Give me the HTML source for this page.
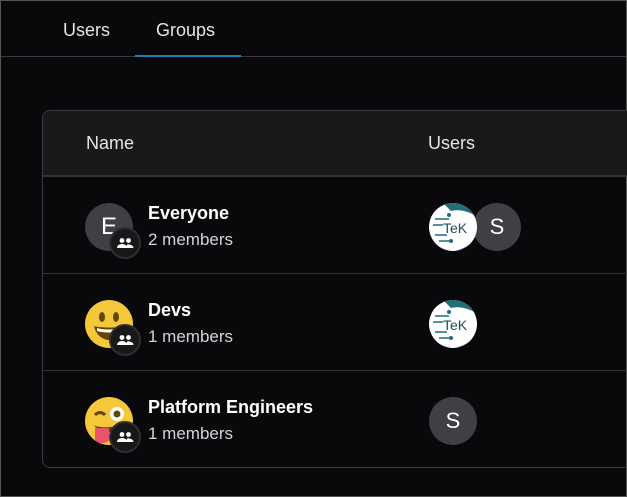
<!DOCTYPE html>
<html><head><style>
*{margin:0;padding:0;box-sizing:border-box}
body{width:627px;height:497px;background:#09090b;font-family:"Liberation Sans",sans-serif;color:#e4e4e7;position:relative;overflow:hidden;border:1px solid #555}
.t{position:absolute;top:19px;font-size:18px;color:#e4e4e7}
.line{position:absolute;left:0;right:0;top:55px;height:1px;background:#3a3a3e}
.ul{position:absolute;left:134px;width:106px;top:54px;height:2px;background:#1a7fb5}
.card{position:absolute;left:41px;top:109px;width:600px;height:358px;border:1px solid #3a3a3e;border-radius:8px;overflow:hidden}
.hd{height:66px;background:#19191b;border-bottom:2px solid #333;position:relative}
.hd span{position:absolute;top:22px;font-size:18px}
.row{height:97px;border-bottom:1px solid #333;position:relative}
.row:last-child{border-bottom:none}
.av{position:absolute;left:42px;top:26px;width:48px;height:48px;border-radius:50%;background:#3f3f46;color:#fff;font-size:24px;text-align:center;line-height:48px;overflow:hidden}
.bd{position:absolute;left:66px;top:50px;width:32px;height:32px;border-radius:50%;background:#18181b;border:2px solid #2e2e32}
.bd svg{position:absolute;left:1px;top:1px}
.nm{position:absolute;left:105px;top:26px;font-size:18px;font-weight:bold;color:#fff}
.sb{position:absolute;left:105px;top:53px;font-size:17px;color:#d4d4d8}
.u{position:absolute;top:26px;width:48px;height:48px;border-radius:50%;background:#3f3f46;color:#fff;font-size:22px;text-align:center;line-height:48px}
.tek{background:#fff;border:0;overflow:hidden}
</style></head><body>
<div class="t" style="left:62px">Users</div>
<div class="t" style="left:155px">Groups</div>
<div class="line"></div><div class="ul"></div>
<div class="card">
<div class="hd"><span style="left:43px">Name</span><span style="left:385px">Users</span></div>
<div class="row">
<div class="av">E</div>
<div class="bd"><svg width="26" height="26" viewBox="0 0 26 26"><g fill="#fff"><circle cx="10" cy="10.5" r="2.4"/><circle cx="16.5" cy="10.5" r="2.4"/><path d="M5 18c0-3 3-4 5-4s5 1 5 4z M14 18c0-2 1-3 1.5-3.8 2.5 0 6 1 6 3.8z"/></g></svg></div>
<div class="nm">Everyone</div><div class="sb">2 members</div>
<div class="u" style="left:430px">S</div>
<div class="u tek" style="left:386px"><svg width="48" height="48" viewBox="0 0 48 48"><path d="M14 0h34v14C40 8 30 6 22 8z" fill="#1f6e7a"/><path d="M26 48h22V34C42 42 34 46 26 48z" fill="#1f6e7a"/><g stroke="#1f6e7a" stroke-width="1.5" fill="none"><path d="M6 16h14M4 22h10M6 32h12M10 38h14"/></g><circle cx="20" cy="12" r="2" fill="#1f6e7a"/><circle cx="22" cy="38" r="2" fill="#1f6e7a"/><text x="14" y="30" font-size="14" fill="#1f4e5a" font-family="Liberation Sans">TeK</text></svg></div>
</div>
<div class="row">
<div class="av" style="background:#f5c73b"><svg width="48" height="48" viewBox="0 0 48 48"><ellipse cx="17" cy="17" rx="3" ry="5" fill="#664500"/><ellipse cx="31" cy="17" rx="3" ry="5" fill="#664500"/><path d="M9 26c4 2 26 2 30 0-2 10-10 14-15 14S11 36 9 26z" fill="#664500"/><path d="M12 28c6 2 18 2 24 0v3c-6 2-18 2-24 0z" fill="#fff"/></svg></div>
<div class="bd"><svg width="26" height="26" viewBox="0 0 26 26"><g fill="#fff"><circle cx="10" cy="10.5" r="2.4"/><circle cx="16.5" cy="10.5" r="2.4"/><path d="M5 18c0-3 3-4 5-4s5 1 5 4z M14 18c0-2 1-3 1.5-3.8 2.5 0 6 1 6 3.8z"/></g></svg></div>
<div class="nm">Devs</div><div class="sb">1 members</div>
<div class="u tek" style="left:386px"><svg width="48" height="48" viewBox="0 0 48 48"><path d="M14 0h34v14C40 8 30 6 22 8z" fill="#1f6e7a"/><path d="M26 48h22V34C42 42 34 46 26 48z" fill="#1f6e7a"/><g stroke="#1f6e7a" stroke-width="1.5" fill="none"><path d="M6 16h14M4 22h10M6 32h12M10 38h14"/></g><circle cx="20" cy="12" r="2" fill="#1f6e7a"/><circle cx="22" cy="38" r="2" fill="#1f6e7a"/><text x="14" y="30" font-size="14" fill="#1f4e5a" font-family="Liberation Sans">TeK</text></svg></div>
</div>
<div class="row">
<div class="av" style="background:#f5c73b"><svg width="48" height="48" viewBox="0 0 48 48"><path d="M10 18q5-5 10 0" stroke="#664500" stroke-width="3" fill="none"/><circle cx="32" cy="17" r="7" fill="#fff"/><circle cx="32" cy="17" r="3.5" fill="#664500"/><path d="M8 28c6 3 18 3 26 0-3 6-10 8-17 7z" fill="#664500"/><path d="M10 31h14v12c-2 4-12 4-14 0z" fill="#e8546c"/></svg></div>
<div class="bd"><svg width="26" height="26" viewBox="0 0 26 26"><g fill="#fff"><circle cx="10" cy="10.5" r="2.4"/><circle cx="16.5" cy="10.5" r="2.4"/><path d="M5 18c0-3 3-4 5-4s5 1 5 4z M14 18c0-2 1-3 1.5-3.8 2.5 0 6 1 6 3.8z"/></g></svg></div>
<div class="nm">Platform Engineers</div><div class="sb">1 members</div>
<div class="u" style="left:386px">S</div>
</div>
</div>
</body></html>
